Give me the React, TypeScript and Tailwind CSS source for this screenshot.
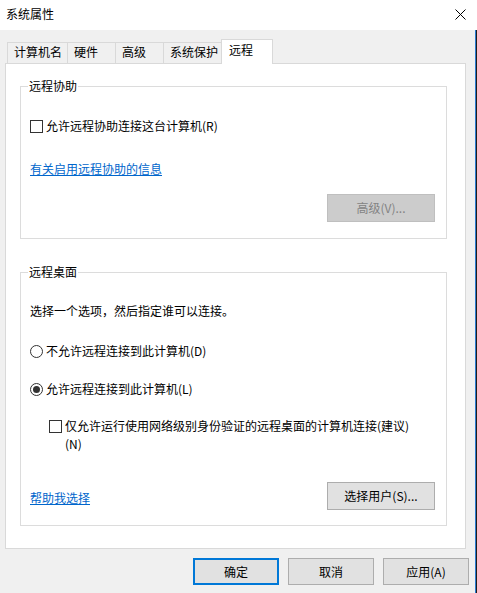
import { type ReactNode } from 'react';

function CheckBox() {
  return <span className="block h-[13px] w-[13px] shrink-0 border border-[#333333] bg-white" />;
}

function Radio({ checked }: { checked?: boolean }) {
  return (
    <span className="flex h-[13px] w-[13px] shrink-0 items-center justify-center rounded-full border border-[#333333] bg-white">
      {checked && <span className="block h-[7px] w-[7px] rounded-full bg-[#333333]" />}
    </span>
  );
}

function GroupBox({ title, className, children }: { title: string; className: string; children: ReactNode }) {
  return (
    <div className={`relative ml-[14px] w-[427px] border border-[#dcdcdc] ${className}`}>
      <span className="absolute left-[7px] top-[-9px] bg-white px-px leading-4">{title}</span>
      {children}
    </div>
  );
}

function Button({ label, className }: { label: string; className: string }) {
  return <div className={`flex items-center justify-center ${className}`}>{label}</div>;
}

const tabs = [
  { label: '计算机名', w: 'w-[60px]' },
  { label: '硬件', w: 'w-[48px]' },
  { label: '高级', w: 'w-[48px]' },
  { label: '系统保护', w: 'w-[58px]' },
];

export default function App() {
  return (
    <div className="flex h-[593px] w-[477px] flex-col bg-[#f0f0f0] font-['Noto_Sans_CJK_SC',sans-serif] text-[12px] leading-4 text-black">
      {/* title bar */}
      <div className="flex h-[30px] items-center justify-between bg-white pb-[2px] pl-[6px] pr-[11px]">
        <span>系统属性</span>
        <svg width="11" height="11" viewBox="0 0 11 11" className="block">
          <path d="M0.5 0.5 L10.5 10.5 M10.5 0.5 L0.5 10.5" stroke="#000" strokeWidth="1" fill="none" />
        </svg>
      </div>

      <div className="flex flex-1">
        <div className="w-[475px] pl-[5px] pt-[9px]">
          {/* tabs */}
          <div className="flex items-end pl-[2px]">
            {tabs.map((t) => (
              <div key={t.label} className={`h-[21px] border-l border-t border-[#d9d9d9] pl-[6px] pt-px ${t.w}`}>
                {t.label}
              </div>
            ))}
            <div className="relative z-10 mb-[-1px] h-[25px] w-[52px] border-x border-t border-[#d9d9d9] bg-white pl-[7px] pt-[2px]">
              远程
            </div>
          </div>

          {/* panel */}
          <div className="h-[486px] w-[461px] border border-[#d9d9d9] bg-white pt-[22px]">
            <GroupBox title="远程协助" className="h-[153px] pl-[9px] pt-[31px]">
              <div className="flex items-center gap-[3px]">
                <CheckBox />
                <span>允许远程协助连接这台计算机(R)</span>
              </div>
              <div className="mt-[27px] text-[#0066cc] underline">有关启用远程协助的信息</div>
              <div className="mt-[17px] flex justify-end pr-[11px]">
                <Button label="高级(V)..." className="h-[28px] w-[108px] border border-[#bfbfbf] bg-[#cccccc] text-[#838383]" />
              </div>
            </GroupBox>

            <GroupBox title="远程桌面" className="mt-[33px] h-[254px] pl-[9px] pt-[30px]">
              <div>选择一个选项，然后指定谁可以连接。</div>
              <div className="mt-[24px] flex items-center gap-[3px]">
                <Radio />
                <span>不允许远程连接到此计算机(D)</span>
              </div>
              <div className="mt-[22px] flex items-center gap-[3px]">
                <Radio checked />
                <span>允许远程连接到此计算机(L)</span>
              </div>
              <div className="mt-[20px] flex items-start gap-[3px] pl-[19px]">
                <span className="mt-[3px]">
                  <CheckBox />
                </span>
                <span className="w-[350px] leading-[18px]">仅允许运行使用网络级别身份验证的远程桌面的计算机连接(建议)(N)</span>
              </div>
              <div className="mt-[29px] flex items-center justify-between pr-[11px]">
                <span className="pt-[3px] text-[#0066cc] underline">帮助我选择</span>
                <Button label="选择用户(S)..." className="h-[28px] w-[108px] border border-[#adadad] bg-[#e1e1e1]" />
              </div>
            </GroupBox>
          </div>

          {/* dialog buttons */}
          <div className="mt-[9px] flex justify-end gap-[9px] pr-[6px]">
            <Button label="确定" className="h-[27px] w-[86px] border-2 border-[#0078d7] bg-[#e1e1e1]" />
            <Button label="取消" className="h-[27px] w-[86px] border border-[#adadad] bg-[#e1e1e1]" />
            <Button label="应用(A)" className="h-[27px] w-[86px] border border-[#adadad] bg-[#e1e1e1]" />
          </div>
        </div>
        <div className="w-px bg-[#2b7bd1]" />
        <div className="w-px bg-[#1e1e1e]" />
      </div>
    </div>
  );
}
